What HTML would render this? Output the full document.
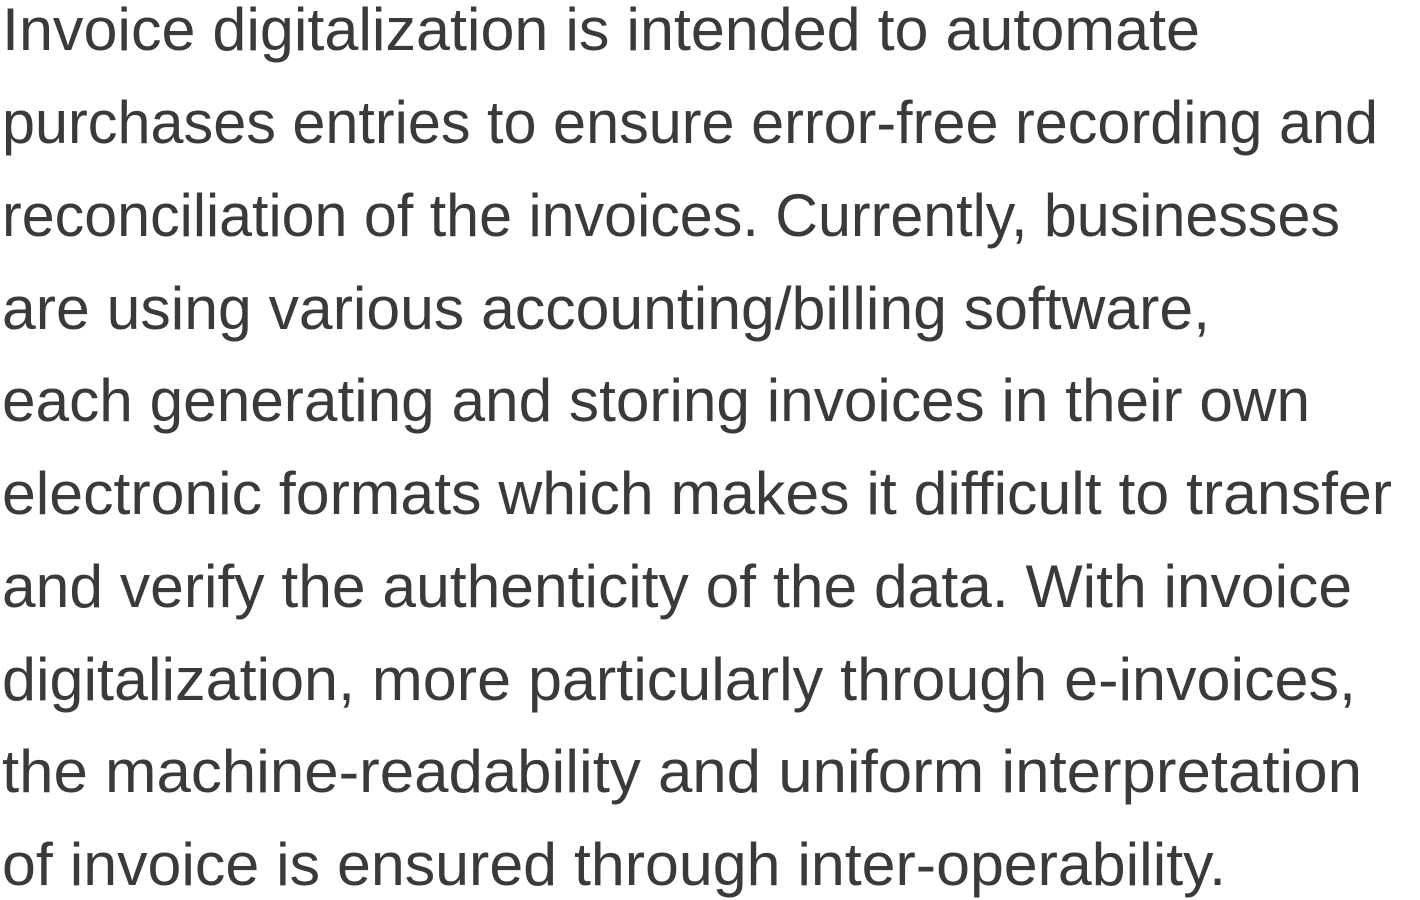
<!DOCTYPE html>
<html><head><meta charset="utf-8"><style>
html,body{margin:0;padding:0;background:#fff;width:1420px;height:900px;overflow:hidden}
svg{display:block}
text{font-family:"Liberation Sans",sans-serif;font-size:60px;fill:#3a3a3a}
</style></head><body>
<svg width="1420" height="900" xmlns="http://www.w3.org/2000/svg">
<text x="2" y="50" textLength="1198" lengthAdjust="spacingAndGlyphs">Invoice digitalization is intended to automate</text>
<text x="2" y="143" textLength="1376" lengthAdjust="spacingAndGlyphs">purchases entries to ensure error-free recording and</text>
<text x="2" y="236" textLength="1338" lengthAdjust="spacingAndGlyphs">reconciliation of the invoices. Currently, businesses</text>
<text x="2" y="329" textLength="1208" lengthAdjust="spacingAndGlyphs">are using various accounting/billing software,</text>
<text x="2" y="421" textLength="1308" lengthAdjust="spacingAndGlyphs">each generating and storing invoices in their own</text>
<text x="2" y="514" textLength="1390" lengthAdjust="spacingAndGlyphs">electronic formats which makes it difficult to transfer</text>
<text x="2" y="607" textLength="1350" lengthAdjust="spacingAndGlyphs">and verify the authenticity of the data. With invoice</text>
<text x="2" y="700" textLength="1354" lengthAdjust="spacingAndGlyphs">digitalization, more particularly through e-invoices,</text>
<text x="2" y="792" textLength="1360" lengthAdjust="spacingAndGlyphs">the machine-readability and uniform interpretation</text>
<text x="2" y="885" textLength="1224" lengthAdjust="spacingAndGlyphs">of invoice is ensured through inter-operability.</text>
</svg>
</body></html>
